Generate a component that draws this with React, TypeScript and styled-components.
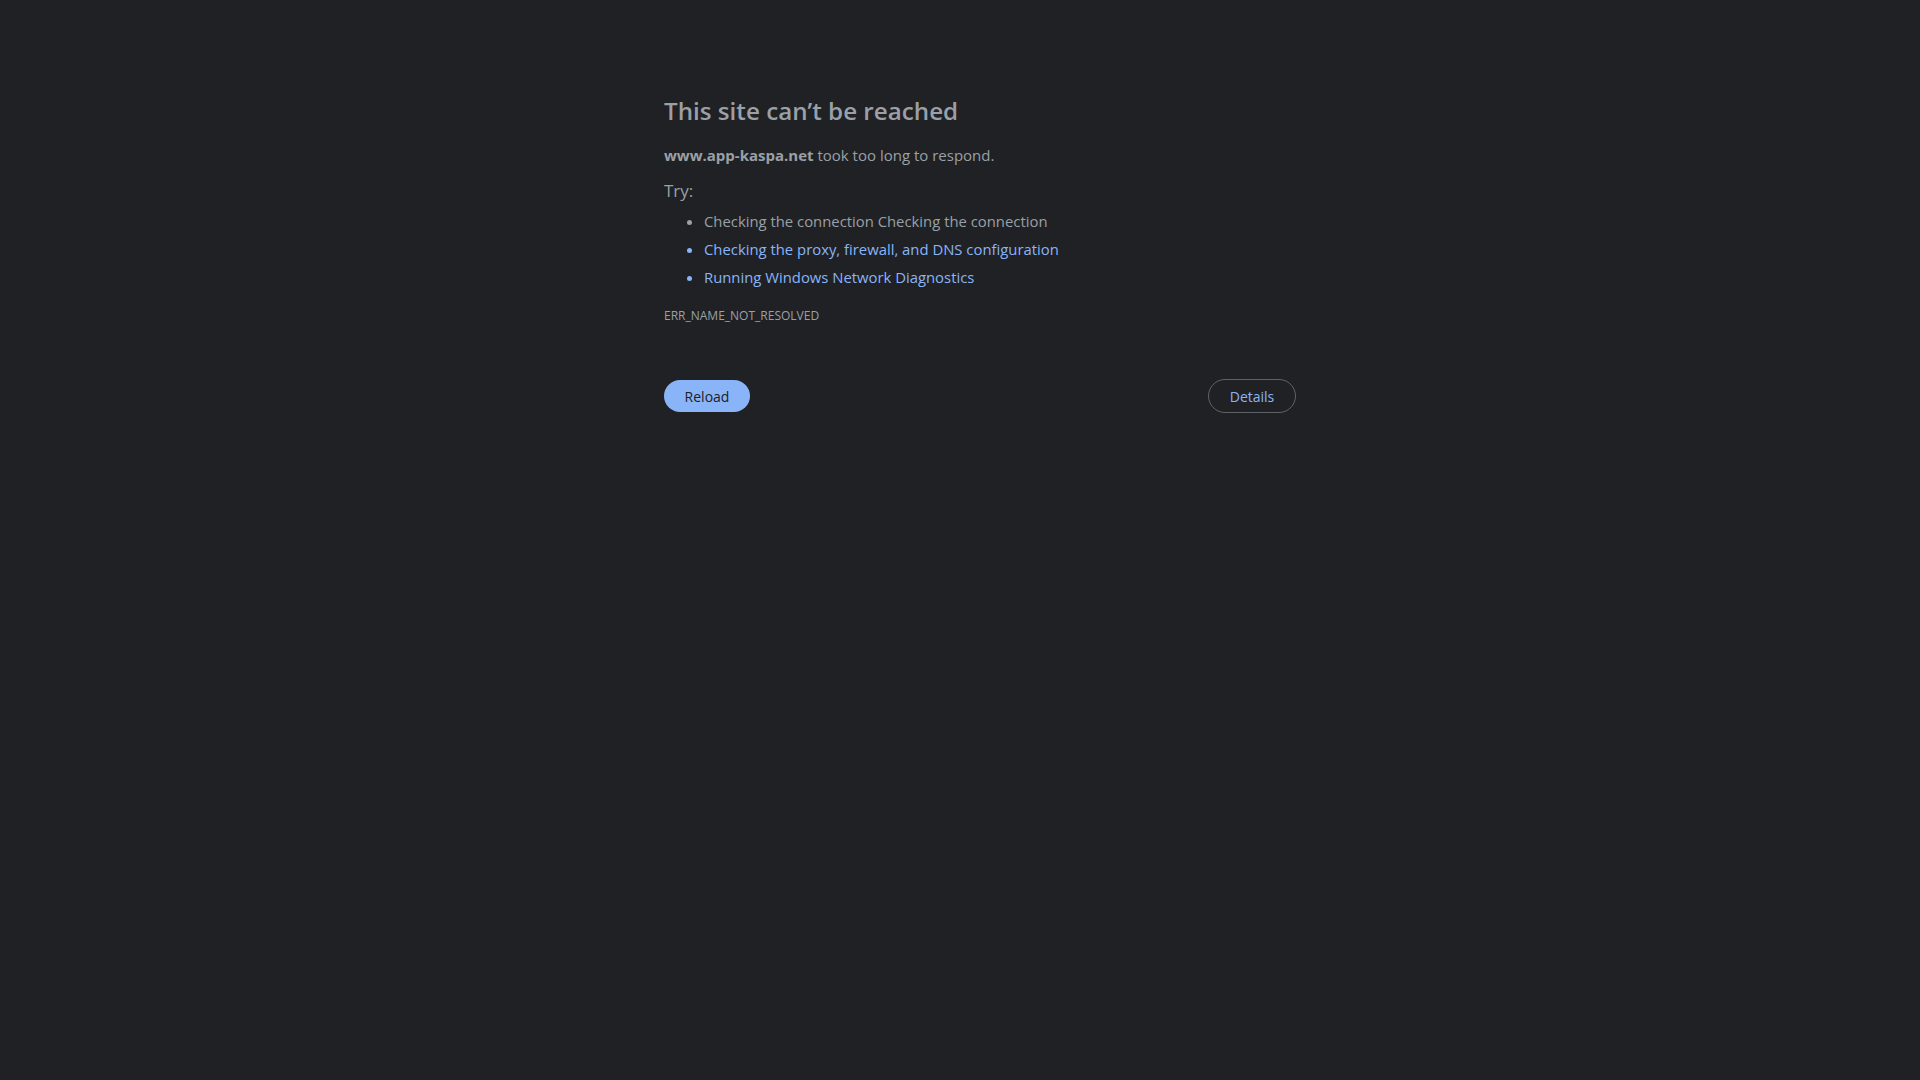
import React from "react";
import styled, { createGlobalStyle } from "styled-components";

const GlobalStyle = createGlobalStyle`
    html, body {
        margin: 0;
        padding: 0;
        background-color: #202124;
        height: 100%;
    }
    body {
        font-family: "Open Sans", "Liberation Sans", sans-serif;
        color: #9aa0a6;
    }
`

const tips = [
    { text: "Checking the connection Checking the connection", link: false },
    { text: "Checking the proxy, firewall, and DNS configuration", link: true },
    { text: "Running Windows Network Diagnostics", link: true },
]

const App = () => {
    return (
        <>
        <GlobalStyle />
        <Page>
            <Wrapper>
                <Title>This site can’t be reached</Title>
                <Summary>
                    <Host>www.app-kaspa.net</Host> took too long to respond.
                </Summary>
                <TryLabel>Try:</TryLabel>
                <Suggestions>
                    {tips.map(tip => (
                        <Suggestion key={tip.text} link={tip.link}>{tip.text}</Suggestion>
                    ))}
                </Suggestions>
                <ErrorCode>ERR_NAME_NOT_RESOLVED</ErrorCode>
                <Buttons>
                    <ReloadButton>Reload</ReloadButton>
                    <DetailsButton>Details</DetailsButton>
                </Buttons>
            </Wrapper>
        </Page>
        </>
    )
}

const Page = styled.div`
    min-height: 100vh;
    background-color: #202124;
    padding-top: 96px;
    box-sizing: border-box;
`

const Wrapper = styled.div`
    width: 632px;
    margin-left: 664px;
`

const Title = styled.h1`
    margin: 0 0 17px;
    font-size: 24.2px;
    font-weight: 600;
    line-height: 30px;
    color: #9aa0a6;
`

const Summary = styled.p`
    margin: 0 0 12px;
    font-size: 15px;
    line-height: 24px;
`

const Host = styled.strong`
    font-weight: 700;
`

const TryLabel = styled.p`
    margin: 0 0 4px;
    font-size: 17px;
    line-height: 24px;
`

interface SuggestionProps {
    link: boolean
}

const Suggestions = styled.ul`
    margin: 0 0 15px;
    padding-left: 40px;
`

const Suggestion = styled.li<SuggestionProps>`
    font-size: 14.85px;
    line-height: 28px;
    color: ${props => props.link ? "#8ab4f8" : "#9aa0a6"};
`

const ErrorCode = styled.div`
    font-size: 12px;
    line-height: 20px;
    text-transform: uppercase;
`

const Buttons = styled.div`
    display: flex;
    justify-content: space-between;
    align-items: center;
    margin-top: 53px;
`

const ReloadButton = styled.button`
    width: 86px;
    height: 32px;
    border: none;
    border-radius: 16px;
    background-color: #8ab4f8;
    color: #202124;
    font-family: "Open Sans", "Liberation Sans", sans-serif;
    font-size: 14px;
    cursor: pointer;
`

const DetailsButton = styled.button`
    width: 88px;
    height: 34px;
    border: 1px solid #5f6368;
    border-radius: 17px;
    background-color: transparent;
    color: #8ab4f8;
    font-family: "Open Sans", "Liberation Sans", sans-serif;
    font-size: 14px;
    cursor: pointer;
`

export default App
